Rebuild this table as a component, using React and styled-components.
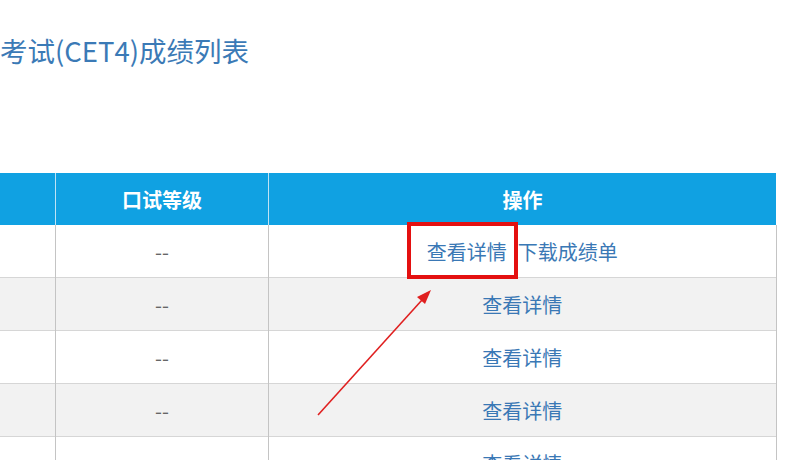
import React from "react";
import styled, { createGlobalStyle } from "styled-components";

const GlobalStyle = createGlobalStyle`
  html, body {
    margin: 0;
    padding: 0;
    background: #fff;
  }
  body {
    font-family: "Microsoft YaHei", "Noto Sans CJK SC", "Open Sans", sans-serif;
    overflow: hidden;
  }
`;

const Page = styled.div`
  position: relative;
  width: 800px;
  height: 460px;
  overflow: hidden;
`;

const Title = styled.h2`
  margin: 0;
  padding: 31px 0 0 0;
  height: 173px;
  box-sizing: border-box;
  font-size: 27.5px;
  line-height: 38px;
  font-weight: 400;
  color: #3b7ab6;
`;

const Table = styled.table`
  border-collapse: collapse;
  table-layout: fixed;
  width: 774px;
  font-size: 20px;
`;

const HeadCell = styled.th`
  width: ${(p) => p.$w}px;
  height: 52px;
  padding: 0;
  background: #10a1e2;
  color: #fff;
  font-weight: 700;
  text-align: center;
  border-left: 1px solid #bfe3f5;
  &:first-child {
    border-left: none;
  }
`;

const Row = styled.tr`
  background: ${(p) => (p.$alt ? "#f2f2f2" : "#fff")};
  border-bottom: 1px solid #d6d6d6;
`;

const Cell = styled.td`
  height: 52px;
  padding: 0;
  text-align: center;
  color: #666;
  border-left: 1px solid #c4c4c4;
  border-right: 1px solid #c4c4c4;
  &:first-child {
    border-left: none;
  }
`;

const Link = styled.span`
  position: relative;
  display: inline-block;
  line-height: 29px;
  color: #3a78b5;
  & + & {
    margin-left: 11px;
  }
`;

const Highlight = styled.span`
  position: absolute;
  left: -20px;
  right: -11px;
  top: -15px;
  bottom: -13px;
  border: 4px solid #e41010;
  pointer-events: none;
`;

const Arrow = styled.svg`
  position: absolute;
  left: 0;
  top: 0;
  pointer-events: none;
`;

const rows = [
  { grade: "--", download: true },
  { grade: "--" },
  { grade: "--" },
  { grade: "--" },
  { grade: "--" },
];

export default function App() {
  return (
    <Page>
      <GlobalStyle />
      <Title>考试(CET4)成绩列表</Title>
      <Table>
        <thead>
          <tr>
            <HeadCell $w={55}></HeadCell>
            <HeadCell $w={212}>口试等级</HeadCell>
            <HeadCell $w={507}>操作</HeadCell>
          </tr>
        </thead>
        <tbody>
          {rows.map((r, i) => (
            <Row key={i} $alt={i % 2 === 1}>
              <Cell></Cell>
              <Cell>{r.grade}</Cell>
              <Cell>
                <Link>
                  查看详情
                  {r.download && <Highlight />}
                </Link>
                {r.download && <Link>下载成绩单</Link>}
              </Cell>
            </Row>
          ))}
        </tbody>
      </Table>
      <Arrow width="800" height="460" viewBox="0 0 800 460">
        <line x1="318" y1="415" x2="422" y2="300" stroke="#e02020" strokeWidth="1.6" />
        <polygon points="431,290 417,297 425,304" fill="#e02020" />
      </Arrow>
    </Page>
  );
}
